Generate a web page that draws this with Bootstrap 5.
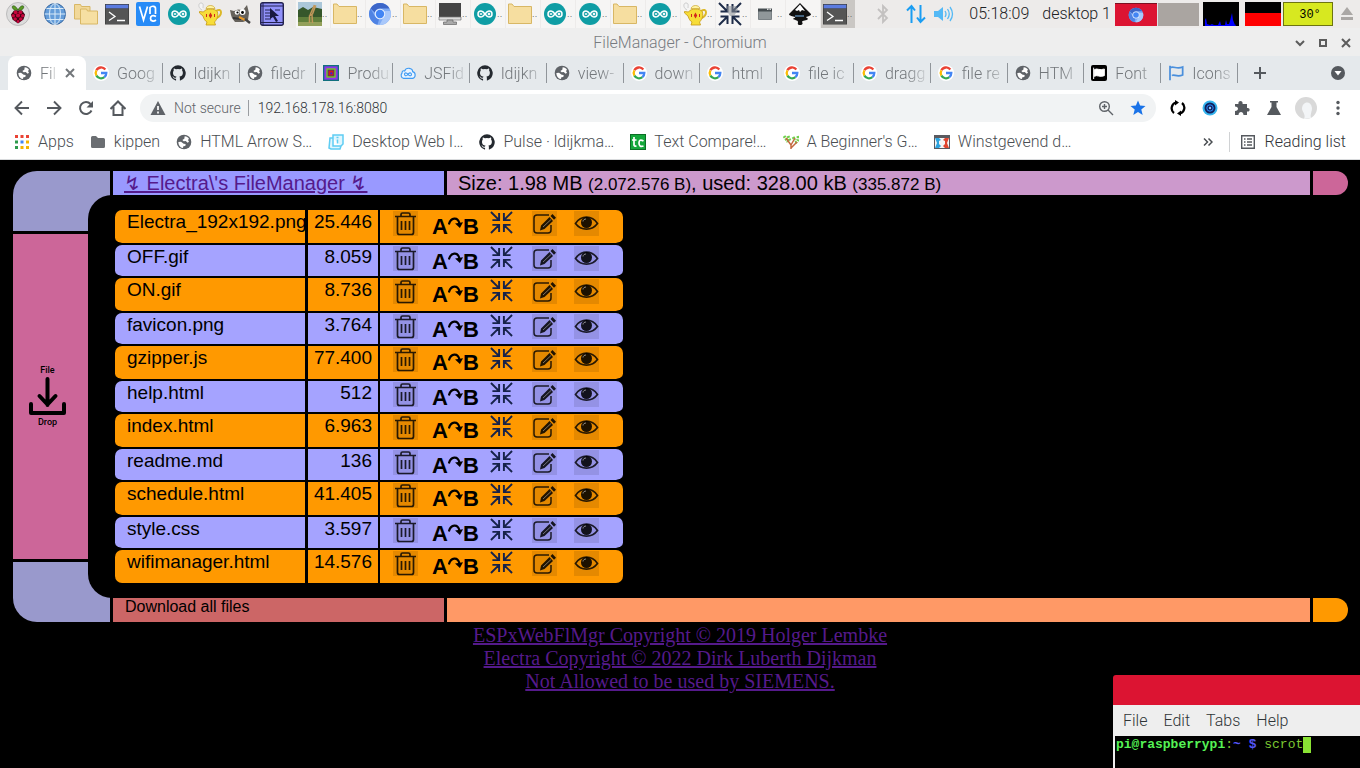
<!DOCTYPE html>
<html lang="en">
<head>
<meta charset="utf-8">
<meta name="viewport" content="width=device-width, initial-scale=1">
<title>FileManager</title>
<link href="https://cdn.jsdelivr.net/npm/bootstrap@5.3.0/dist/css/bootstrap.min.css" rel="stylesheet">
<style>
  body { background: #000; font-family: Roboto, sans-serif; font-weight: 300; font-size: 16px; line-height: 20px; color: #202124; }
  button { color: inherit; font: inherit; background: none; border: 0; padding: 0; }
  svg { display: block; flex: none; }
  .i24 { width: 24px; height: 24px; }
  .i22 { width: 22px; height: 22px; }
  .i16 { width: 16px; height: 16px; }

  /* desktop panel */
  .panel { height: 28px; background: #edebea; }
  .launchers { width: 296px; padding-left: 6px; }
  .launchers button { width: 31px; }
  .launchers button:first-child { width: 37px; }
  .task { width: 35px; height: 28px; background: #f6f5f4; border-right: 1px solid #edebea; padding-left: 2px; overflow: hidden; }
  .task span { font-size: 11px; line-height: 28px; color: #555; }
  .task.active { background: #cac7c4; }
  .tray { padding-right: 7px; }
  .clock { margin: 0 13px 0 15px; }
  .mon { width: 36px; height: 24px; background: #000; }
  .mon-net { margin: 0 2px 0 6px; }
  .pager { width: 42px; height: 23px; }
  .pager.on { background: #dc1432; border-top: 1px solid #7c1020; }
  .pager.off { background: #aaa5a1; }
  .cpu-temp { width: 50px; height: 24px; background: #d7e820; border: 1px solid #6d7410; font: 12px/24px "Liberation Mono", monospace; color: #000; padding-left: 4px; }

  /* browser chrome */
  .titlebar { height: 28px; background: #eee; color: #777b80; padding-top: 1px; }
  .win-ctl { width: 72px; margin-left: -72px; padding-right: 2px; color: #5c5c5c; }
  .win-ctl button { width: 24px; }
  .tabstrip { height: 34px; background: #e5e9ec; padding-left: 8px; color: #73777b; }
  .tab-on { flex: none; width: 78px; height: 34px; background: #fff; border-radius: 8px 8px 0 0; padding: 0 8px; }
  .tabs { min-width: 0; }
  .tab-off { flex: 1 1 0; min-width: 0; height: 34px; padding-left: 7px; }
  .tab-off::after { content: ""; width: 1px; height: 20px; background: #90959a; margin-left: 4px; flex: none; }
  .tab-title { white-space: nowrap; text-align: left; padding-top: 1px; min-width: 0; -webkit-mask-image: linear-gradient(90deg, #000 55%, rgba(0,0,0,.2)); mask-image: linear-gradient(90deg, #000 55%, rgba(0,0,0,.2)); }
  .strip-end { flex: none; width: 122px; padding: 0 14px; color: #55595e; }
  .toolbar { height: 36px; background: #fff; padding: 0 6px; color: #55595e; }
  .toolbar > button { width: 32px; height: 32px; }
  .omnibox { height: 28px; border-radius: 14px; background: #f1f3f4; padding: 0 10px; margin: 0 6px; color: #5f6368; font-size: 14px; }
  .omnibox input { font-size: 14px; font-weight: 300; border: 0; background: none; color: #303338; outline: 0; min-width: 0; padding: 0; }
  .security { padding-right: 7px; margin-right: 9px; line-height: 16px; border-right: 1px solid #9a9da1; }
  .bookmarks { height: 34px; background: #fff; border-bottom: 1px solid #d8dadc; padding: 0 14px 2px; color: #3c4043; }
  .bookmarks a { color: #4a4e52; text-decoration: none; white-space: nowrap; }
  .more-marks { margin-right: -8px; }
  .reading { border-left: 1px solid #d0d2d4; padding-left: 10px; color: #303338; }

  /* file manager */
  .fm { padding: 11px 12px 0 13px; color: #000; font-family: "Liberation Sans", sans-serif; font-weight: 400; }
  .lcars { gap: 3px; }
  .side { width: 97px; gap: 3px; }
  .elbow { height: 60px; background: #99c; }
  .elbow-top { border-top-left-radius: 24px; }
  .elbow-bottom { border-bottom-left-radius: 24px; }
  .dropzone { width: 75px; background: #c69; font: 500 9px/10px Roboto, sans-serif; gap: 1px; padding: 0 6px 2px 0; }
  .bar { height: 24px; gap: 3px; }
  .bar-name { width: 331px; }
  .bar-cap { width: 35px; border-radius: 0 12px 12px 0; }
  .c-name { background: #99f; padding-left: 11px; font-size: 20px; line-height: 24px; }
  .c-name a, .credits a { color: #551a8b; }
  .c-size { background: #c9c; padding-left: 11px; font-size: 20px; line-height: 24px; }
  .c-size span { font-size: 17px; }
  .c-pink { background: #c69; }
  .c-all { background: #c66; }
  .c-all button { padding-left: 12px; font-size: 16px; line-height: 18px; }
  .c-peach { background: #f96; }
  .c-orange { background: #f90; }
  .stage { position: relative; background: #000; margin-left: -25px; padding: 15px 0 15px 27px; border-radius: 24px 0 0 24px; }
  .files { width: 508px; table-layout: fixed; border-collapse: separate; border-spacing: 0; font-size: 19px; line-height: 24px; }
  .files td { height: 35px; background: #f90; padding: 0; vertical-align: top; white-space: nowrap; border: 0 solid #000; border-bottom-width: 2px; background-clip: padding-box; }
  .files tr:nth-child(even) td { height: 33px; background-color: #a5a3ff; }
  .files tr:last-child td { height: 33px; border-bottom-width: 0; }
  .files .f-name { width: 193px; padding-left: 12px; border-right-width: 3px; border-radius: 7px 0 0 7px; }
  .files .f-size { width: 72px; padding-right: 6px; text-align: right; border-right-width: 2px; }
  .files .f-act { width: 243px; border-radius: 0 7px 7px 0; }
  .acts { padding: 1px 0 0 13px; }
  .tint { width: 25px; height: 25px; background: rgba(0,0,0,.1); }
  .tint svg { width: 25px; height: 25px; }
  .acts .tint + .tint { margin-left: 17px; }
  .rename { height: 25px; margin: 0 11px 0 14px; padding-top: 3px; font-size: 22px; line-height: 25px; }
  .rename svg { width: 15px; height: 15px; margin-top: 2px; }
  .pack { color: #16224a; margin-right: 19px; }
  .pack svg { width: 23px; height: 23px; }
  .credits { font: 20px/23px "Liberation Serif", serif; padding-top: 2px; }

  /* terminal window floating over the desktop */
  .term { position: fixed; right: 0; bottom: 0; width: 247px; height: 93px; border-radius: 3px 0 0 0; overflow: hidden; }
  .term-title { height: 30px; background: #dc1432; }
  .term-menu { height: 31px; background: #eee; gap: 16px; padding-left: 10px; color: #2e3436; }
  .term-body { flex: 1; background: #000; border-left: 2px solid #eee; font: 13px/18px "Liberation Mono", monospace; color: #7cc832; padding-left: 1px; white-space: pre; }
  .term-body b { color: #55f255; }
  .term-body i { font-style: normal; font-weight: 700; color: #5555f5; }
  .cursor { width: 8px; height: 16px; margin-top: 1px; background: #8ae234; }
</style>
</head>
<body class="d-flex flex-column min-vh-100">

<svg class="d-none" xmlns="http://www.w3.org/2000/svg">
  <symbol id="pi" viewBox="0 0 24 24"><circle cx="12" cy="12" r="11.5" fill="#dcdcdc" stroke="#bbb"/><path d="M12 8C9 2 5 3.500 6.500 6c1 2 3.500 3 5.500 2 2 1 4.500 0 5.500-2 1.500-2.500-2.500-4-5.500 2z" fill="#5a9a23" stroke="#254d10" stroke-width=".6"/><path d="M8 8.500h8l3 4-1.500 5-5.500 4-5.500-4-1.500-5z" fill="#3b0312"/><g fill="#c7053d"><circle cx="9.600" cy="10.300" r="1.900"/><circle cx="14.400" cy="10.300" r="1.900"/><circle cx="12" cy="13.500" r="2.100"/><circle cx="7.300" cy="13.700" r="1.700"/><circle cx="16.700" cy="13.700" r="1.700"/><circle cx="9.200" cy="17" r="1.800"/><circle cx="14.800" cy="17" r="1.800"/><circle cx="12" cy="19.500" r="1.400"/></g></symbol>
  <symbol id="web" viewBox="0 0 24 24"><circle cx="12" cy="12" r="10.500" fill="#659dd9" stroke="#34659f"/><g fill="none" stroke="#d9eaf8" stroke-width="1"><path d="M12 1.500v21M1.500 12h21M3.500 6.500h17M3.500 17.500h17"/><ellipse cx="12" cy="12" rx="5.500" ry="10.500"/></g></symbol>
  <symbol id="folders" viewBox="0 0 24 24"><path d="M.5 17V2.500h6l1 2H16V17z" fill="#f1d899" stroke="#d8b765"/><path d="M6.500 22V7h6l1 2h10v13z" fill="#f6dfa2" stroke="#d8b765"/></symbol>
  <symbol id="folder" viewBox="0 0 24 24"><path d="M.5 21.500V2h3.500l2 2.500h17.500v17z" fill="#f6dea0" stroke="#d8b765"/></symbol>
  <symbol id="term" viewBox="0 0 24 24"><path d="M0 2h24v20.500H0z" fill="#3e3e3e"/><path d="M.7 6.500h22.600V22H.7z" fill="#555"/><path d="M.7 2.700h22.600v3.600H.7z" fill="#5b7be0"/><path d="M4 10l6 4.500L4 18.500M12 18.500h8" fill="none" stroke="#fff" stroke-width="1.300"/></symbol>
  <symbol id="vnc" viewBox="0 0 24 24"><rect width="24" height="24" rx="2" fill="#278bf7"/><path d="M3.500 4.500 7.500 18l4-13.500M14 12V5.500c2-2 5.500-1.500 5.500 1V12M20 14.500c-3-2-5.500-.5-5.500 2s3 3.500 5.500 1.500" fill="none" stroke="#fff" stroke-width="1.700"/></symbol>
  <symbol id="ard" viewBox="0 0 24 24"><circle cx="12" cy="12" r="11" fill="#0f9da4"/><path d="M12 12c-1.500-2-2.500-3-4-3a3 3 0 0 0 0 6c1.500 0 2.500-1 4-3s2.500-3 4-3a3 3 0 0 1 0 6c-1.500 0-2.500-1-4-3zM6.800 12h2.400M14.800 12h2.400M16 10.800v2.400" fill="none" stroke="#fff" stroke-width="1.500"/></symbol>
  <symbol id="tea" viewBox="0 0 24 24"><path d="M4 8C0 6 0 1 3 1s2 3 2 5" fill="#f4f4f4" stroke="#ccc" stroke-width="1"/><path d="M18 9c6-4 7 4 .500 7" fill="none" stroke="#dcb828" stroke-width="2"/><path d="M1.500 9.500l4 .5c2-4 12-4 14 0 1 5-1 8-3 10l1 3H8l1-3c-2-1-3-3-4-6L1.500 11z" fill="#f7dd38" stroke="#c59812" stroke-width=".8"/><path d="M8 6.500c1-4 8-4 9 0z" fill="#fff3a0" stroke="#c59812" stroke-width=".6"/><path d="M12.500 10.500l1.700 3-1.700 3-1.700-3z" fill="#d2281c"/><path d="M8.500 12v3M16.500 12v3" stroke="#d2281c"/></symbol>
  <symbol id="gimp" viewBox="0 0 24 24"><path d="M1 8l4 1 4-1.500 5 .5 4-5 2 8-1 7-5 2H6l-3-4-1-3z" fill="#66625c"/><circle cx="8" cy="10.500" r="2.300" fill="#fff"/><circle cx="13.500" cy="10" r="3" fill="#fff"/><circle cx="8.500" cy="10.500" r="1.100"/><circle cx="13.500" cy="10.500" r="1.400"/><path d="M4 16l8 1" stroke="#333" stroke-width="2"/><path d="M10 15l6 3" stroke="#e79a2c" stroke-width="2"/><path d="M16 17l5 4" stroke="#444" stroke-width="2.500"/></symbol>
  <symbol id="geany" viewBox="0 0 24 24"><rect x=".7" y=".7" width="22.600" height="22.600" rx="2" fill="#9191fa" stroke="#232250" stroke-width="1.400"/><path d="M3 1v22M1 4h22M5 8h5M5 11h6M5 14h5M5 17h6M15 8h5M1 20.500h22" stroke="#232250" stroke-width="1"/><path d="M10 6l9 8h-4l3 5-2 1-3-5-3 2z" fill="#191940"/></symbol>
  <symbol id="giraffe" viewBox="0 0 24 24"><path d="M0 0h24v24H0z" fill="#607f3b"/><path d="M0 0h24v8H0z" fill="#abc7d9"/><path d="M0 8l5-3 5 3 5-3 9 2v8H0z" fill="#36572b"/><path d="M0 20h24v4H0z" fill="#93a05a"/><path d="M15.500 3.500l2 .5-3 8-3 2v7M14 13l.5 8M12 13l4-9" fill="none" stroke="#c0975a" stroke-width="1.500"/></symbol>
  <symbol id="chr" viewBox="0 0 24 24"><circle cx="12" cy="12" r="11" fill="#7eabf5"/><path d="M2.500 6.500A11 11 0 0 1 21.600 6.500H12a5.500 5.500 0 0 0-5.200 4z" fill="#3c66c8"/><path d="M2.500 6.500 7.200 14.800 11 17.500 9.500 22.700A11 11 0 0 1 2.500 6.500z" fill="#4f83e3"/><path d="M22.500 9a11 11 0 0 1-11 14l4-7.500c2.500-2 2-5 .500-6.500z" fill="#a9c8fa"/><circle cx="12" cy="12" r="5.300" fill="#e4eefd"/><circle cx="12" cy="12" r="4.200" fill="#4285f4"/></symbol>
  <symbol id="pc" viewBox="0 0 24 24"><path d="M1 1h22v17H1z" fill="#454545"/><path d="M1 15h22v3H1z" fill="#ddd" stroke="#777" stroke-width=".7"/><path d="M9 18h6v2h3.500v2.500h-13V20H9z" fill="#aaa" stroke="#666" stroke-width=".7"/></symbol>
  <symbol id="squeeze" viewBox="0 0 24 24"><path d="M1 1l8 8M2.500 9.500h7V2M23 1l-8 8M21.500 9.500h-7V2M1 23l8-8M2.500 14.500h7V22M23 23l-8-8M21.500 14.500h-7V22" fill="none" stroke="currentColor" stroke-width="2"/></symbol>
  <symbol id="squeezed-app" viewBox="0 0 24 24"><path d="M1 1l8 8M2.500 9.500h7V2M23 1l-8 8M21.500 9.500h-7V2M1 23l8-8M2.500 14.500h7V22M23 23l-8-8M21.500 14.500h-7V22" fill="none" stroke="#1d2b48" stroke-width="2"/><path d="M9 4h9l2 4-4 6h-4L9 9z" fill="#8b9097" fill-opacity=".55"/></symbol>
  <symbol id="win" viewBox="0 0 24 24"><path d="M5.500 8.500h13v9h-13z" fill="#90979a" stroke="#7a8185"/><path d="M5 6.500h14v3H5z" fill="#454c50"/><path d="M14 6.500h1.500V8H14zM16.500 6.500H18V8h-1.500z" fill="#ddd"/></symbol>
  <symbol id="ink" viewBox="0 0 24 24"><path d="M12 1L1 12c0 2 4 2 6 3 1 1-2 1-2 2 1 1 5 1 5 3 0 1-1 3 2 3s3-2 2-3c0-2 5-1 6-3 0-1-2-1-2-2 2-1 5-1 5-3z" fill="#111"/><path d="M12 2.500L7 8l2 1 2-1 1 2 2-2 3 1z" fill="#fff"/><path d="M7 14h9" stroke="#7ab8f0"/></symbol>
  <symbol id="earth" viewBox="0 0 24 24"><circle cx="12" cy="12" r="11" fill="#5f6368"/><path fill="#fff" d="M13 3.500c3 0 5 1.500 6.500 3.500L18 9l1.500 2.500-2 1.500-3-2.500-3 .5-2-2 3-2zM3.500 12l4-.5 4 3 3 .5-.5 3-3 .5-.5 2.500C6 20.500 3.500 17 3.500 12z"/></symbol>
  <symbol id="goo" viewBox="0 0 24 24"><circle cx="12" cy="12" r="12" fill="#fff"/><g fill="none" stroke-width="3.400"><path d="M18.500 6.800A8 8 0 0 0 5.100 8" stroke="#ea4335"/><path d="M5.100 8a8 8 0 0 0 0 8" stroke="#fbbc05"/><path d="M5.100 16a8 8 0 0 0 12 2.200" stroke="#34a853"/><path d="M17.100 18.200A8 8 0 0 0 20 12h-8" stroke="#4285f4"/></g></symbol>
  <symbol id="git" viewBox="0 0 24 24"><path fill="#24292f" d="M12 .5a11.700 11.700 0 0 0-3.700 22.800c.600.100.800-.200.800-.600v-2.200c-3.300.700-4-1.400-4-1.400-.500-1.300-1.300-1.700-1.300-1.700-1-.700.100-.700.100-.700 1.200.100 1.800 1.200 1.800 1.200 1 1.800 2.800 1.300 3.400 1 .100-.800.400-1.300.700-1.600-2.600-.300-5.300-1.300-5.300-5.800 0-1.300.500-2.300 1.200-3.100-.100-.300-.500-1.500.100-3.100 0 0 1-.300 3.200 1.200a11 11 0 0 1 5.800 0c2.200-1.500 3.200-1.200 3.200-1.200.600 1.600.200 2.800.1 3.100.8.800 1.200 1.800 1.200 3.100 0 4.500-2.700 5.500-5.300 5.800.4.400.8 1.100.8 2.200v3.200c0 .4.200.7.800.6A11.700 11.700 0 0 0 12 .5z"/></symbol>
  <symbol id="sq" viewBox="0 0 24 24"><path d="M0 0h24v24H0z" fill="#11707e"/><path d="M2 2h20v20H2z" fill="#8a35e8"/><path d="M5 5h14v14H5z" fill="#79ce1a"/><path d="M7 7h10v10H7z" fill="#5a3a60"/><path d="M8.500 8.500h7v7h-7z" fill="#d81818"/><path d="M11 11h3v3h-3z" fill="#3524d8"/></symbol>
  <symbol id="jsf" viewBox="0 0 24 24"><path d="M5 20a5 5 0 0 1-2-8c0-3 2-4 4-3 2-6 12-5 12 1 5 1 5 9 0 10z" fill="#eaf4ff" stroke="#3f9bf3" stroke-width="1.700"/><path d="M12 14c-4-5-7 0-4 2 2 1 3-1 4-2s2-3 4-2c3 2 0 7-4 2z" fill="none" stroke="#3f9bf3" stroke-width="1.600"/></symbol>
  <symbol id="flagk" viewBox="0 0 24 24"><rect width="24" height="24" rx="3"/><path d="M4 4v17M5 7c4-3 8 2 15-1v10c-7 3-11-2-15 1z" fill="#fff" stroke="#fff" stroke-width="1.500"/></symbol>
  <symbol id="flagb" viewBox="0 0 24 24"><path d="M3 1v22M3 4c6-3 10 3 19-1v12c-9 4-13-2-16 1" fill="none" stroke="#4a8fdc" stroke-width="2.600"/></symbol>
  <symbol id="x" viewBox="0 0 16 16"><path d="M4 4l8 8M12 4l-8 8" stroke="currentColor" stroke-width="2"/></symbol>
  <symbol id="trash" viewBox="0 0 25 25"><path d="M2 5.500h21M8 5V3.500Q8 2 9.500 2h6Q17 2 17 3.500V5M4.500 6v15.500Q4.500 23.500 6.500 23.500h12q2 0 2-2V6M8.500 10v9M12.500 10v9M16.500 10v9" fill="none" stroke="#000" stroke-opacity=".82" stroke-width="1.700"/></symbol>
  <symbol id="edit" viewBox="0 0 25 25"><path d="M17 4H5C3 4 2 5 2 7v12c0 2 1 3 3 3h11c2 0 3-1 3-3v-5" fill="none" stroke="#000" stroke-opacity=".82" stroke-width="1.500"/><path fill="#000" fill-opacity=".85" d="M9 14.500l8.500-8.500 3.500 4-8.500 8-4.500 1.500zM18.500 5l2-2 3.500 3.800-2 2z"/><path d="M11 16l8-7.500" stroke="#fff" stroke-opacity=".4"/></symbol>
  <symbol id="eye" viewBox="0 0 25 25"><path d="M1.500 12.500C7 4 18 4 23.500 12.500 18 20 7 20 1.500 12.500z" fill="none" stroke="#000" stroke-opacity=".82" stroke-width="1.700"/><circle cx="12.500" cy="11.500" r="5.500" fill="#000" fill-opacity=".88"/><path d="M9 10.500c0-1.500 1.500-2.500 3-2.500" stroke="#fff" stroke-opacity=".5" fill="none"/></symbol>
  <symbol id="turn" viewBox="0 0 17 16"><path d="M1 9C3 1 11 0 13 8" fill="none" stroke="#000" stroke-width="2.400"/><path d="M8 8l9-1.500L13.500 13z"/></symbol>
</svg>

<header class="panel d-flex align-items-center">
  <div class="launchers d-flex align-items-center">
    <button aria-label="Menu"><svg class="i24"><use href="#pi"/></svg></button>
    <button aria-label="Web browser"><svg class="i24"><use href="#web"/></svg></button>
    <button aria-label="File manager"><svg class="i24"><use href="#folders"/></svg></button>
    <button aria-label="Terminal"><svg class="i24"><use href="#term"/></svg></button>
    <button aria-label="VNC"><svg class="i24"><use href="#vnc"/></svg></button>
    <button aria-label="Arduino"><svg class="i24"><use href="#ard"/></svg></button>
    <button aria-label="Teapot"><svg class="i24"><use href="#tea"/></svg></button>
    <button aria-label="GIMP"><svg class="i24"><use href="#gimp"/></svg></button>
    <button aria-label="Editor"><svg class="i24"><use href="#geany"/></svg></button>
  </div>
  <div id="tasks" class="d-flex"></div>
  <div class="tray d-flex align-items-center ms-auto">
    <svg width="14" height="20" viewBox="0 0 14 20"><path d="M2 5l9 9-4 4V2l4 4-9 9" fill="none" stroke="#c3c1c0" stroke-width="1.800"/></svg>
    <svg class="ms-3" width="20" height="20" viewBox="0 0 20 20"><path d="M5.500 19V2M1 6.500L5.500 2 9 6.500M14.500 1v17M11 13.500l3.500 4.500 4.500-4.500" fill="none" stroke="#1a9df2" stroke-width="2"/></svg>
    <svg class="ms-2" width="20" height="16" viewBox="0 0 20 16"><path d="M0 5h4l5-4v14l-5-4H0z" fill="#54b9f5"/><path d="M11 5q2 3 0 6M13.500 3q3.500 5 0 10M16 1q5 7 0 14" fill="none" stroke="#54b9f5" stroke-width="1.300"/></svg>
    <time class="clock">05:18:09</time>
    <span class="pe-1">desktop 1</span>
    <button class="pager on d-flex justify-content-center align-items-center" aria-label="Desktop 1"><svg class="i16"><use href="#chr"/></svg></button>
    <button class="pager off border-start" aria-label="Desktop 2"></button>
    <svg class="mon ms-1" viewBox="0 0 36 24"><path d="M2 24V18l1-2 1 6 3 1 2-1 2 1h4l2-4 1 4h4l1-5 1 4h2l1-3 2-8 1 7 2 5V22l1 2z" fill="#00f"/></svg>
    <svg class="mon mon-net" viewBox="0 0 36 24"><path d="M0 11h36v13H0z" fill="#f00"/></svg>
    <div class="cpu-temp text-center">30°</div>
    <svg class="ms-2" width="12" height="14" viewBox="0 0 12 14"><path d="M6 0l6 8H0zM0 10h12v3H0z" fill="#aaa7a5"/></svg>
  </div>
</header>

<div class="titlebar d-flex align-items-center">
  <div class="flex-fill text-center">FileManager - Chromium</div>
  <div class="win-ctl d-flex">
    <button aria-label="Minimise"><svg class="i16 m-auto" viewBox="0 0 16 16"><path d="M4 6l4 4 4-4" fill="none" stroke="currentColor" stroke-width="2"/></svg></button>
    <button aria-label="Maximise"><svg class="i16 m-auto" viewBox="0 0 16 16"><path d="M5 5h6v6H5z" fill="none" stroke="currentColor" stroke-width="2"/></svg></button>
    <button aria-label="Close"><svg class="i16 m-auto"><use href="#x"/></svg></button>
  </div>
</div>

<nav class="tabstrip d-flex align-items-center">
  <div class="tab-on d-flex align-items-center"><svg class="i16 me-2"><use href="#earth"/></svg><span class="tab-title">Fil</span><button class="ms-auto" aria-label="Close tab"><svg class="i16"><use href="#x"/></svg></button></div>
  <div id="tabs" class="tabs d-flex flex-fill"></div>
  <div class="strip-end d-flex align-items-center justify-content-between">
    <button aria-label="New tab"><svg class="i16" viewBox="0 0 16 16"><path d="M8 2v12M2 8h12" stroke="currentColor" stroke-width="2"/></svg></button>
    <button aria-label="Search tabs"><svg class="i16" viewBox="0 0 16 16"><circle cx="8" cy="8" r="7" fill="currentColor"/><path d="M4.500 6h7L8 10.500z" fill="#fff"/></svg></button>
  </div>
</nav>

<div class="toolbar d-flex align-items-center">
  <button aria-label="Back"><svg class="i16 m-auto" viewBox="0 0 16 16"><path d="M15 8H2M8 1.500L1.500 8 8 14.500" fill="none" stroke="currentColor" stroke-width="1.900"/></svg></button>
  <button aria-label="Forward"><svg class="i16 m-auto" viewBox="0 0 16 16"><path d="M1 8h13M8 1.500L14.500 8 8 14.500" fill="none" stroke="currentColor" stroke-width="1.900"/></svg></button>
  <button aria-label="Reload"><svg class="i16 m-auto" viewBox="0 0 16 16"><path d="M13.500 10.500A6 6 0 1 1 12.500 4" fill="none" stroke="currentColor" stroke-width="2"/><path d="M15 1v6.500H8.500z" fill="currentColor"/></svg></button>
  <button aria-label="Home"><svg class="i16 m-auto" viewBox="0 0 16 16"><path d="M.5 9L8 1.500 15.500 9M3.500 7v8h9V7" fill="none" stroke="currentColor" stroke-width="2"/></svg></button>
  <div class="omnibox d-flex align-items-center flex-fill">
    <svg class="i16 me-2" viewBox="0 0 16 16"><path d="M8 1l7.500 14H.5z" fill="currentColor"/><path d="M8 6v4M8 11.500v2" stroke="#fff" stroke-width="1.700"/></svg>
    <label class="security" for="url">Not secure</label>
    <input id="url" class="flex-fill" type="text" value="192.168.178.16:8080">
    <button class="me-3" aria-label="Zoom"><svg class="i16" viewBox="0 0 16 16"><circle cx="6.500" cy="6.500" r="4.800" fill="none" stroke="currentColor" stroke-width="1.400"/><path d="M10 10l5 5M4 6.500h5M6.500 4v5" stroke="currentColor" stroke-width="1.400"/></svg></button>
    <button aria-label="Bookmark"><svg class="i16" viewBox="0 0 16 16"><path d="M8 .5l2.100 5 5.400.4-4.200 3.500L12.700 15 8 12l-4.700 3 1.400-5.600L.5 5.900l5.400-.4z" fill="#1a73e8"/></svg></button>
  </div>
  <button aria-label="Sync"><svg class="i16 m-auto" viewBox="0 0 16 16"><path d="M4 13A6 6 0 0 1 6 2.500M10 13.500A6 6 0 0 0 12 3" fill="none" stroke="#000" stroke-width="2.300"/><path d="M5 0l4 2.500-4 3zM11 10.500v5.500l-4-2.500z"/></svg></button>
  <button aria-label="Camera"><svg class="i16 m-auto" viewBox="0 0 16 16"><circle cx="8" cy="8" r="7.500" fill="#36b5ef"/><circle cx="8" cy="8" r="5.500" fill="#10205c"/><circle cx="8" cy="8" r="3.200" fill="none" stroke="#268cff"/><circle cx="8" cy="8" r="1.200" fill="#8ec8ff"/></svg></button>
  <button aria-label="Extensions"><svg class="i16 m-auto" viewBox="0 0 16 16"><path d="M1 4h3.500c-1-4 5-4 4 0H13v4c3.500-1 3.500 4.500 0 3.500V15H9.500c0-4-5-4-5 0H1v-4c4 0 4-4.500 0-4.500z" fill="currentColor"/></svg></button>
  <button aria-label="Experiments"><svg class="i16 m-auto" viewBox="0 0 16 16"><path d="M4 1h8v1.500h-1.500V7l4.500 8H1l4.500-8V2.500H4z" fill="currentColor"/></svg></button>
  <button aria-label="Profile"><svg class="i22 m-auto" viewBox="0 0 22 22"><circle cx="11" cy="11" r="11" fill="#d9d9d9"/><path d="M9 22c2-4-1-6-2-10 0-8 9-9 10-1 0 4-2 6-1 10z" fill="#f3f5f7"/></svg></button>
  <button aria-label="More"><svg class="i16 m-auto" viewBox="0 0 16 16" fill="currentColor"><circle cx="8" cy="2.500" r="1.700"/><circle cx="8" cy="8" r="1.700"/><circle cx="8" cy="13.500" r="1.700"/></svg></button>
</div>

<nav class="bookmarks d-flex align-items-center gap-3">
  <a href="#" class="d-flex align-items-center gap-2"><svg class="i16" viewBox="0 0 16 16"><path d="M1 1h3v3H1zM6.500 1h3v3h-3zM12 1h3v3h-3z" fill="#ea4335"/><path d="M1 6.500h3v3H1zM1 12h3v3H1z" fill="#2c9a4b"/><path d="M6.500 6.500h3v3h-3z" fill="#4285f4"/><path d="M12 6.500h3v3h-3zM6.500 12h3v3h-3zM12 12h3v3h-3z" fill="#f5b400"/></svg>Apps</a>
  <a href="#" class="d-flex align-items-center gap-2"><svg class="i16" viewBox="0 0 16 16"><path d="M1 3.500Q1 2 2.500 2H6l2 2h5.500Q15 4 15 5.500v7q0 1.500-1.500 1.500h-11Q1 14 1 12.500z" fill="#6b6e72"/></svg>kippen</a>
  <a href="#" class="d-flex align-items-center gap-2"><svg class="i16"><use href="#earth"/></svg>HTML Arrow S…</a>
  <a href="#" class="d-flex align-items-center gap-2"><svg class="i16" viewBox="0 0 16 16"><path d="M5 1h10v9l-2 2H5zM5 4H2L1 14l2 1h9l1-3M8.500 3.500h2M9.500 5.500v4" fill="#dff6fe" stroke="#5fcdf3" stroke-width="1.500"/></svg>Desktop Web I…</a>
  <a href="#" class="d-flex align-items-center gap-2"><svg class="i16"><use href="#git"/></svg>Pulse · ldijkma…</a>
  <a href="#" class="d-flex align-items-center gap-2"><svg class="i16" viewBox="0 0 16 16"><path d="M0 0h16v16H0z" fill="#0b6e25"/><path d="M1 1h14v14H1z" fill="#14a83b"/><path d="M4 3v8q0 1.500 2.500 1M2 6h4.500M13.500 7Q9 4.500 9 9t4.500 3" fill="none" stroke="#fff" stroke-width="1.700"/></svg>Text Compare!…</a>
  <a href="#" class="d-flex align-items-center gap-2"><svg class="i16" viewBox="0 0 16 16"><g fill="none" stroke="#6fd04b" stroke-width="3" stroke-dasharray="2 1"><path d="M1 2l4 6M5 2l2 5M15 2q1 6-4 7M10 3l2 3"/></g><path d="M3 4l5 7V15M8 11l4-7M8 14l6-6" fill="none" stroke="#c5683f" stroke-width="1.500"/></svg>A Beginner's G…</a>
  <a href="#" class="d-flex align-items-center gap-2"><svg class="i16" viewBox="0 0 16 16"><path d="M0 1h16v14H0z" fill="#5a5a60"/><path d="M1 4h14v10H1z" fill="#f5f5f5"/><path d="M1 4h4l2 2-2 1v3l2 2-2 2H1l2-5z" fill="#2ca3df"/><path d="M15 4h-4L9 6l2 1v3l-2 2 2 2h4l-2-5z" fill="#e0452f"/></svg>Winstgevend d…</a>
  <button class="more-marks ms-auto me-0" aria-label="More bookmarks"><svg width="10" height="10" viewBox="0 0 10 10"><path d="M1 1.500L4.500 5 1 8.500M5.500 1.500L9 5 5.500 8.500" fill="none" stroke="#4a4e52" stroke-width="1.500"/></svg></button>
  <button class="reading d-flex align-items-center gap-2"><svg class="i16" viewBox="0 0 16 16"><path d="M1.700 1.700h12.600v12.600H1.700zM4 5h1.500M4 8h1.500M4 11h1.500M7 5h5M7 8h5M7 11h5" fill="none" stroke="#55595e" stroke-width="1.400"/></svg>Reading list</button>
</nav>

<main class="fm">
  <div class="lcars d-flex">
    <div class="side d-flex flex-column">
      <div class="elbow elbow-top"></div>
      <div class="dropzone flex-fill d-flex flex-column align-items-center justify-content-center">
        <span>File</span>
        <svg width="37" height="40" viewBox="0 0 37 40"><path d="M18.500 3v26M10.500 20l8 8.500 8-8.500M2 28v9h33v-9" fill="none" stroke="#000" stroke-width="4" stroke-linecap="round" stroke-linejoin="round"/></svg>
        <span>Drop</span>
      </div>
      <div class="elbow elbow-bottom"></div>
    </div>
    <div class="flex-fill">
      <div class="bar d-flex">
        <div class="bar-name c-name"><a href="#">↯ Electra\'s FileManager ↯</a></div>
        <div class="flex-fill c-size">Size: 1.98 MB <span>(2.072.576 B)</span>, used: 328.00 kB <span>(335.872 B)</span></div>
        <div class="bar-cap c-pink"></div>
      </div>
      <div class="stage"><table class="files"><tbody id="files"></tbody></table></div>
      <div class="bar d-flex">
        <div class="bar-name c-all d-flex align-items-start"><button>Download all files</button></div>
        <div class="flex-fill c-peach"></div>
        <div class="bar-cap c-orange"></div>
      </div>
    </div>
  </div>
</main>
<footer class="credits text-center">
  <a href="#">ESPxWebFlMgr Copyright © 2019 Holger Lembke</a><br>
  <a href="#">Electra Copyright © 2022 Dirk Luberth Dijkman</a><br>
  <a href="#">Not Allowed to be used by SIEMENS.</a>
</footer>

<section class="term d-flex flex-column" aria-label="Terminal">
  <div class="term-title"></div>
  <div class="term-menu d-flex align-items-center"><button>File</button><button>Edit</button><button>Tabs</button><button>Help</button></div>
  <div class="term-body d-flex"><b>pi@raspberrypi</b>:<i>~ $</i> scrot<span class="cursor"></span></div>
</section>

<script src="https://cdn.jsdelivr.net/npm/bootstrap@5.3.0/dist/js/bootstrap.bundle.min.js"></script>
<script>
  const icon = (id, cls = '') => `<svg class="${cls}"><use href="#${id}"/></svg>`;

  const tasks = ['giraffe','folder','chr','folder','pc','ard','folder','ard','ard','folder','ard','tea','squeezed-app','win','ink','term'];
  document.getElementById('tasks').innerHTML = tasks.map((t, i) =>
    `<button class="task d-flex align-items-center ${i === tasks.length - 1 ? 'active' : ''}" aria-label="${t}">${icon(t, 'i24')}<span>..</span></button>`).join('');

  const tabs = [['goo','Goog'],['git','ldijkn'],['earth','filedr'],['sq','Produ'],['jsf','JSFid'],['git','ldijkn'],['earth','view-'],
    ['goo','down'],['goo','html'],['goo','file ic'],['goo','dragg'],['goo','file re'],['earth','HTM'],['flagk','Font'],['flagb','Icons']];
  document.getElementById('tabs').innerHTML = tabs.map(([ic, title]) =>
    `<button class="tab-off d-flex align-items-center">${icon(ic, 'i16 me-2')}<span class="tab-title flex-fill">${title}</span></button>`).join('');

  const files = [['Electra_192x192.png','25.446'],['OFF.gif','8.059'],['ON.gif','8.736'],['favicon.png','3.764'],['gzipper.js','77.400'],['help.html','512'],
    ['index.html','6.963'],['readme.md','136'],['schedule.html','41.405'],['style.css','3.597'],['wifimanager.html','14.576']];
  document.getElementById('files').innerHTML = files.map(([name, size]) => `<tr>
    <td class="f-name">${name}</td><td class="f-size">${size}</td>
    <td class="f-act"><div class="acts d-flex align-items-start">
      <button class="tint" aria-label="Delete">${icon('trash')}</button>
      <button class="rename d-flex align-items-start" aria-label="Rename"><b>A</b>${icon('turn')}<b>B</b></button>
      <button class="pack" aria-label="Gzip">${icon('squeeze')}</button>
      <button class="tint" aria-label="Edit">${icon('edit')}</button>
      <button class="tint" aria-label="View">${icon('eye')}</button>
    </div></td></tr>`).join('');
</script>
</body>
</html>
